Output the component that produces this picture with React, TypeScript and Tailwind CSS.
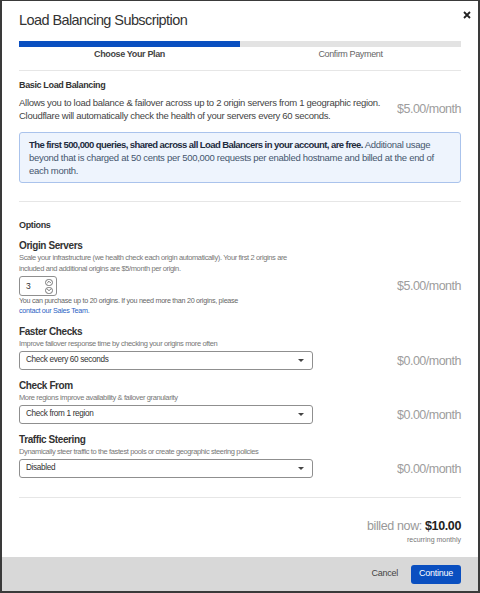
import { ChevronDown, ChevronUp } from 'lucide-react';

const FONT = { fontFamily: '"Liberation Sans", Arial, sans-serif' };

const OPTIONS = [
  {
    id: 'checks',
    title: 'Faster Checks',
    desc: 'Improve failover response time by checking your origins more often',
    value: 'Check every 60 seconds',
  },
  {
    id: 'from',
    title: 'Check From',
    desc: 'More regions improve availability & failover granularity',
    value: 'Check from 1 region',
  },
  {
    id: 'steering',
    title: 'Traffic Steering',
    desc: 'Dynamically steer traffic to the fastest pools or create geographic steering policies',
    value: 'Disabled',
  },
];

function Price({ amount }: { amount: string }) {
  return <span className="text-[12.5px] leading-[18px] tracking-[-0.04em] text-[#9d9d9d]">{amount}/month</span>;
}

function Select({ value }: { value: string }) {
  return (
    <div className="w-[294px] h-[19px] border border-[#8f8f8f] rounded-[3px] bg-white flex items-center justify-between pl-[6px] pr-[8px]">
      <span className="text-[8.2px] tracking-[-0.04em] text-[#333]">{value}</span>
      <span className="w-0 h-0 border-l-[3px] border-r-[3px] border-t-[3px] border-l-transparent border-r-transparent border-t-[#444]"></span>
    </div>
  );
}

export default function App() {
  return (
    <div className="h-[593px] bg-[#3a3a3a] px-[2px] pt-[1px] overflow-hidden" style={FONT}>
      <div className="bg-white flex flex-col">
        {/* Header */}
        <div className="px-[17px] pt-[9px] relative">
          <h1 className="text-[14.5px] leading-[20px] tracking-[-0.04em] text-[#333]">Load Balancing Subscription</h1>
          <button className="absolute right-[7px] top-[10px] text-[#222]">
            <svg width="8" height="8" viewBox="0 0 8 8">
              <path d="M1 1 L7 7 M7 1 L1 7" stroke="currentColor" strokeWidth="1.8" />
            </svg>
          </button>

          {/* Steps */}
          <div className="mt-[11px] grid grid-cols-2">
            <div className="flex flex-col">
              <div className="h-[6px] bg-[#0a4fc0]"></div>
              <p className="text-center text-[9px] leading-[14px] tracking-[-0.04em] font-bold text-[#444]">Choose Your Plan</p>
            </div>
            <div className="flex flex-col">
              <div className="h-[6px] bg-[#e3e3e3]"></div>
              <p className="text-center text-[9px] leading-[14px] tracking-[-0.04em] text-[#666]">Confirm Payment</p>
            </div>
          </div>
          <div className="mt-[9px] border-t border-[#e6e6e6]"></div>

          {/* Basic plan */}
          <h2 className="mt-[7px] text-[9px] leading-[14px] tracking-[-0.04em] font-bold text-[#333]">Basic Load Balancing</h2>
          <div className="mt-[4px] flex items-center justify-between">
            <p className="text-[9.5px] leading-[13px] tracking-[-0.03em] text-[#444]">
              Allows you to load balance &amp; failover across up to 2 origin servers from 1 geographic region.
              <br />
              Cloudflare will automatically check the health of your servers every 60 seconds.
            </p>
            <Price amount="$5.00" />
          </div>

          <div className="mt-[10px] border border-[#aac3ec] bg-[#eef4fd] rounded-[3px] px-[9px] py-[5px]">
            <p className="text-[9.5px] leading-[13px] tracking-[-0.03em] text-[#45566e]">
              <span className="tracking-[-0.06em] font-bold text-[#1e2c40]">
                The first 500,000 queries, shared across all Load Balancers in your account, are free.
              </span>{' '}
              Additional usage beyond that is charged at 50 cents per 500,000 requests per enabled hostname and billed at the end of each month.
            </p>
          </div>
          <div className="mt-[18px] border-t border-[#e6e6e6]"></div>

          {/* Options */}
          <h2 className="mt-[16px] text-[9px] leading-[14px] tracking-[-0.04em] font-bold text-[#333]">Options</h2>

          <h3 className="mt-[7px] text-[10px] leading-[13px] tracking-[-0.04em] font-bold text-[#333]">Origin Servers</h3>
          <p className="text-[7.5px] leading-[11px] tracking-[-0.05em] text-[#777]">
            Scale your infrastructure (we health check each origin automatically). Your first 2 origins are
            <br />
            included and additional origins are $5/month per origin.
          </p>
          <div className="mt-[2px] flex items-center justify-between">
            <div className="w-[38px] h-[20px] border border-[#8f8f8f] rounded-[3px] flex items-center justify-between pl-[6px] pr-[3px]">
              <span className="text-[8.5px] text-[#333]">3</span>
              <div className="flex flex-col gap-[1px]">
                <span className="w-[8px] h-[7px] border border-[#777] rounded-full flex items-center justify-center">
                  <ChevronUp size={6} strokeWidth={3} className="text-[#444]" />
                </span>
                <span className="w-[8px] h-[7px] border border-[#777] rounded-full flex items-center justify-center">
                  <ChevronDown size={6} strokeWidth={3} className="text-[#444]" />
                </span>
              </div>
            </div>
            <Price amount="$5.00" />
          </div>
          <p className="text-[7.2px] leading-[10px] tracking-[-0.04em] text-[#666]">
            You can purchase up to 20 origins. If you need more than 20 origins, please
            <br />
            <a className="text-[#2c62c4]">contact our Sales Team.</a>
          </p>

          {OPTIONS.map(opt => (
            <div key={opt.id} className="mt-[9px]">
              <h3 className="text-[10px] leading-[13px] tracking-[-0.04em] font-bold text-[#333]">{opt.title}</h3>
              <p className="text-[7.5px] leading-[11px] tracking-[-0.05em] text-[#777]">{opt.desc}</p>
              <div className="mt-[2px] flex items-center justify-between">
                <Select value={opt.value} />
                <Price amount="$0.00" />
              </div>
            </div>
          ))}

          <div className="mt-[19px] border-t border-[#e6e6e6]"></div>

          {/* Total */}
          <div className="mt-[19px] flex flex-col items-end">
            <p className="text-[12.5px] leading-[18px] tracking-[-0.03em] text-[#999]">
              billed now: <span className="font-bold text-[#222]">$10.00</span>
            </p>
            <p className="text-[7px] leading-[9px] text-[#777]">recurring monthly</p>
          </div>
        </div>

        {/* Footer */}
        <div className="mt-[13px] h-[34px] bg-[#d8d8d8] flex items-center justify-end gap-[13px] px-[17px]">
          <button className="text-[9px] tracking-[-0.03em] text-[#444]">Cancel</button>
          <button className="w-[50px] h-[19px] rounded-[3px] bg-[#0a4fc0] text-white text-[9px] tracking-[-0.03em]">Continue</button>
        </div>
      </div>
    </div>
  );
}
